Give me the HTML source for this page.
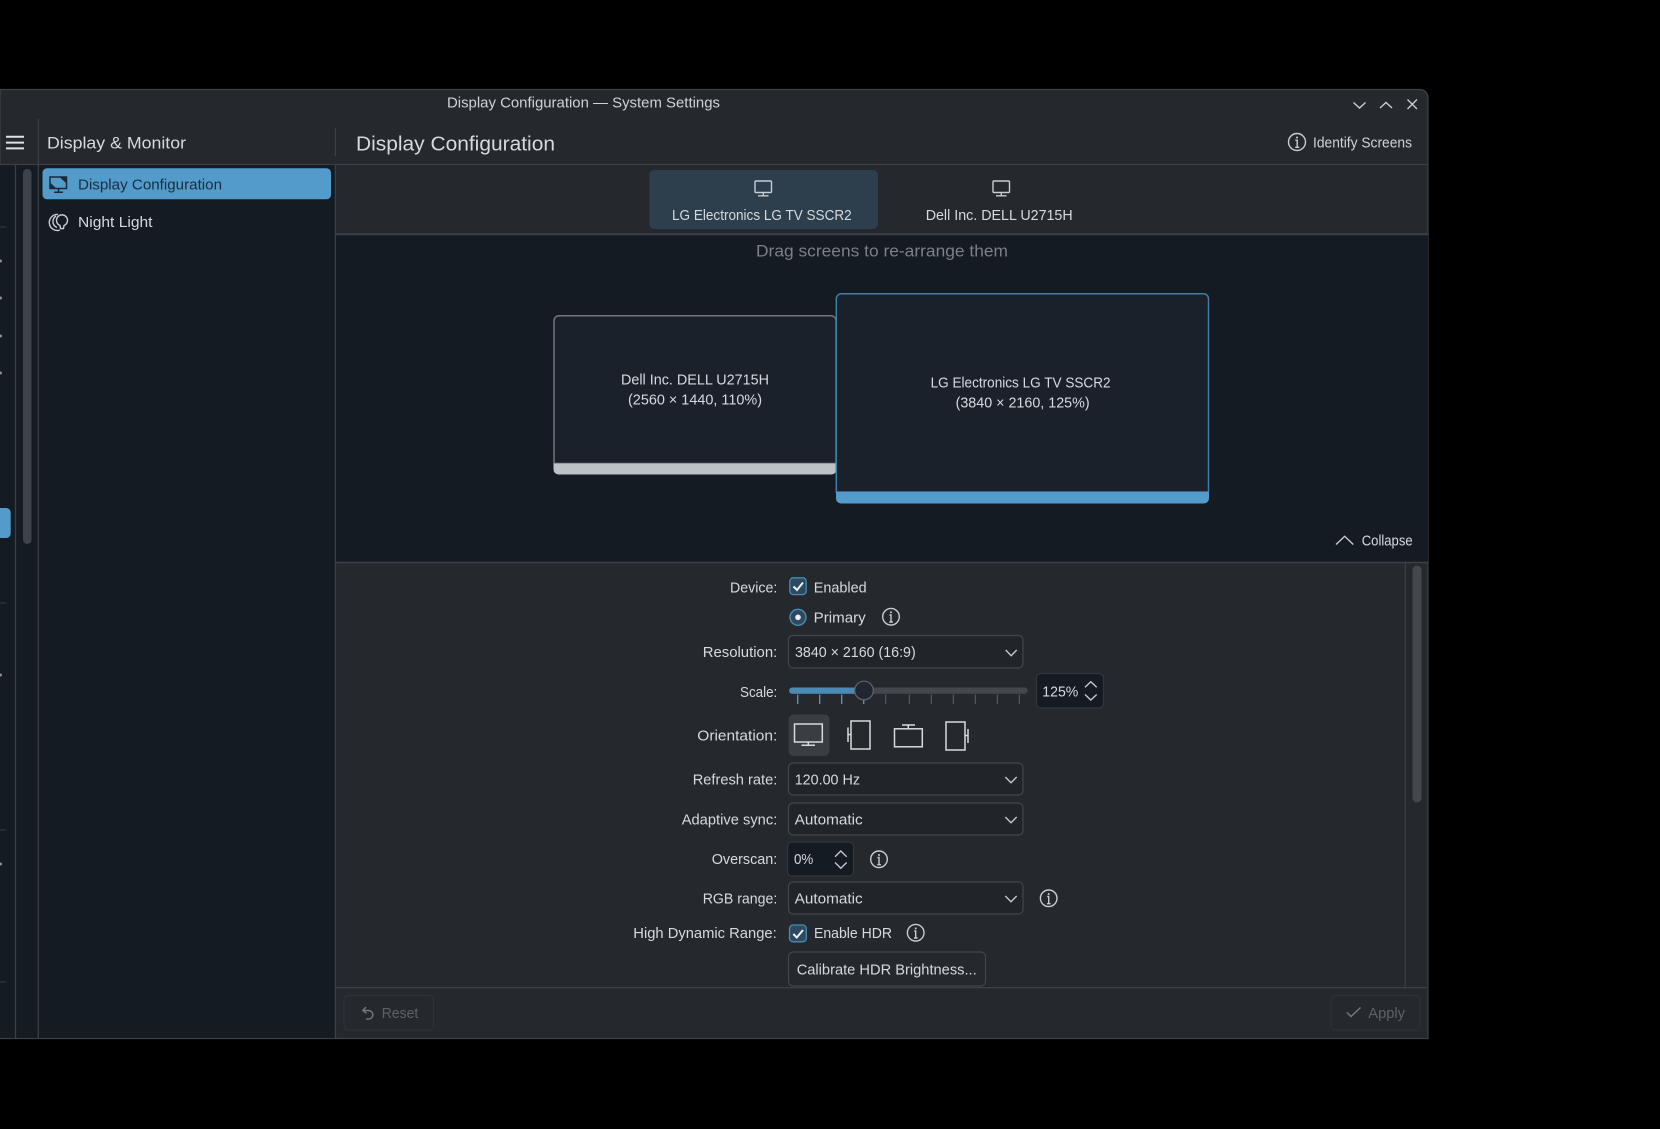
<!DOCTYPE html>
<html><head><meta charset="utf-8"><title>Display Configuration — System Settings</title>
<style>
html,body{margin:0;padding:0;background:#000;width:1660px;height:1129px;overflow:hidden}
svg{display:block;filter:blur(.3px);font-family:"Liberation Sans",sans-serif;font-size:15px;fill:#d6d9dd}
.l{stroke:#3c3f45;stroke-width:1.3;fill:none}
.ic{stroke:#c9ccd0;stroke-width:1.4;fill:none}
.ch{stroke:#c4c7cb;stroke-width:1.4;fill:none}
.box{fill:#212429;stroke:#43464c;stroke-width:1.2}
.spin{fill:#141b23;stroke:#33373d;stroke-width:1.2}
</style></head><body>
<svg width="1660" height="1129" viewBox="0 0 1660 1129" xmlns="http://www.w3.org/2000/svg">
<rect width="1660" height="1129" fill="#000"/>
<!-- window -->
<path d="M0 89.500H1420a8 8 0 0 1 8 8V1038.500H0Z" fill="#25282d" stroke="#3e4147" stroke-width="1.200"/>
<!-- sidebars -->
<rect x="0" y="165" width="335" height="873" fill="#151b23"/>
<rect x="336" y="235" width="1092" height="327" fill="#151b23"/>
<!-- lines -->
<path class="l" d="M15.500 165V1038M38.300 119V1038M335.400 128V156M335.400 165V1038M0 164.500H1428M336 234.300H1428M336 562.500H1428M1405.300 563V988M336 987.700H1428" />
<path d="M336 234.300H1428" stroke="#3c3f45" stroke-width="2"/>
<path d="M336 562.500H1428" stroke="#3c3f45" stroke-width="1.600"/>
<!-- left strip fragments -->
<path d="M0 227H6M0 603H6M0 830H6M0 982H6" stroke="#333840" stroke-width="1"/>
<g fill="#8d9196"><circle cx="0.500" cy="261" r="1.500"/><circle cx="0.500" cy="298" r="1.500"/><circle cx="0.500" cy="336" r="1.500"/><circle cx="0.500" cy="373" r="1.500"/><circle cx="0.500" cy="675" r="1.500"/><circle cx="0.500" cy="864" r="1.500"/></g>
<path d="M0 508H6a4.500 4.500 0 0 1 4.700 4.500V533.500a4.500 4.500 0 0 1-4.700 4.500H0Z" fill="#529bcb"/>
<!-- left scrollbar -->
<rect x="23" y="169" width="8.500" height="375" rx="4.200" fill="#3e434a"/>
<!-- title -->
<text x="447" y="107.500" font-size="14.500" textLength="273" lengthAdjust="spacingAndGlyphs" fill="#cfd2d6">Display Configuration — System Settings</text>
<!-- window controls -->
<path class="ic" d="M1353.500 102.500L1359.500 108L1365.500 102.500M1380 108L1386 102.500L1392 108M1407.500 99.500L1417 109M1417 99.500L1407.500 109"/>
<!-- hamburger -->
<path d="M6 136.800H24M6 142.600H24M6 148.400H24" stroke="#dfe2e5" stroke-width="2"/>
<text x="47" y="148.300" font-size="17" textLength="139" lengthAdjust="spacingAndGlyphs">Display &amp; Monitor</text>
<text x="356" y="150.700" font-size="20.500" textLength="199" lengthAdjust="spacingAndGlyphs">Display Configuration</text>
<!-- identify -->
<g class="ic"><circle cx="1297" cy="142" r="8.500"/><path d="M1295.300 140.200H1297.200V147.300M1295.200 147.300H1299.200"/></g><circle cx="1297" cy="137.500" r="1" fill="#c9ccd0"/>
<text x="1313" y="147.500" font-size="14.500" textLength="99" lengthAdjust="spacingAndGlyphs" fill="#cfd2d6">Identify Screens</text>
<!-- sidebar items -->
<rect x="42.500" y="168.300" width="288.500" height="31" rx="4.500" fill="#529bcb"/>
<g stroke="#1c2a37" fill="none" stroke-width="1.500"><rect x="50" y="177" width="16.500" height="11.500"/><path d="M54 192.300H63M58.500 188.500V192"/></g>
<path d="M66 177.500V183L60 177.500ZM50.500 188V183L56 188Z" fill="#1c2a37"/>
<text x="78" y="189.500" textLength="144" lengthAdjust="spacingAndGlyphs" fill="#1c2d3c">Display Configuration</text>
<g class="ic" stroke-width="1.300"><path d="M58 214.500a8 8 0 1 0 2 15.500M56 216a6.500 6.500 0 0 0 1 11.500"/><path d="M60 225.500a5.500 5.500 0 1 1 4 0L63.500 228.500H60.500Z"/></g>
<text x="78" y="227" textLength="74.500" lengthAdjust="spacingAndGlyphs">Night Light</text>
<!-- tabs -->
<rect x="649.300" y="170" width="228.700" height="59" rx="5" fill="#2d3f4d"/>
<g id="mon" class="ic"><rect x="755" y="181" width="16.500" height="11.500" rx="1"/><path d="M758 195.800H768.500M763.300 192.500V195.500"/></g>
<g class="ic"><rect x="993" y="181" width="16.500" height="11.500" rx="1"/><path d="M996 195.800H1006.500M1001.300 192.500V195.500"/></g>
<text x="672" y="220.200" font-size="14.800" textLength="179.700" lengthAdjust="spacingAndGlyphs">LG Electronics LG TV SSCR2</text>
<text x="925.700" y="220.200" font-size="14.800" textLength="147" lengthAdjust="spacingAndGlyphs">Dell Inc. DELL U2715H</text>
<text x="756" y="256.500" font-size="16.500" textLength="252" lengthAdjust="spacingAndGlyphs" fill="#7c7f84">Drag screens to re-arrange them</text>
<!-- screens -->
<path d="M554 320.800a5 5 0 0 1 5-5H831a5 5 0 0 1 5 5V463.500H554Z" fill="#1b212b" stroke="#73767b" stroke-width="1.500"/>
<path d="M553.500 463.500H836.500V469.500a5 5 0 0 1-5 5H558.500a5 5 0 0 1-5-5Z" fill="#bdc2c6"/>
<text x="621" y="384.500" font-size="14.500" textLength="148" lengthAdjust="spacingAndGlyphs">Dell Inc. DELL U2715H</text>
<text x="628" y="404.500" font-size="14.500" textLength="134" lengthAdjust="spacingAndGlyphs">(2560 × 1440, 110%)</text>
<path d="M836.300 298.800a5 5 0 0 1 5-5H1203.500a5 5 0 0 1 5 5V492H836.300Z" fill="#1b212b" stroke="#447ca3" stroke-width="1.500"/>
<path d="M836 492H1209V498.500a5 5 0 0 1-5 5H841a5 5 0 0 1-5-5Z" fill="#529bcb"/>
<text x="930.600" y="387.400" font-size="14.500" textLength="180" lengthAdjust="spacingAndGlyphs">LG Electronics LG TV SSCR2</text>
<text x="955.600" y="407.400" font-size="14.500" textLength="134" lengthAdjust="spacingAndGlyphs">(3840 × 2160, 125%)</text>
<!-- collapse -->
<path class="ic" stroke-width="1.500" d="M1336 544.500L1344.700 536.300L1353.300 544.500"/>
<text x="1361.700" y="545.300" font-size="14.500" textLength="51" lengthAdjust="spacingAndGlyphs">Collapse</text>
<!-- form scrollbar -->
<rect x="1412.500" y="565.500" width="9" height="237" rx="4.500" fill="#44484e"/>
<!-- form -->
<text x="730" y="592.300" textLength="47.300" lengthAdjust="spacingAndGlyphs">Device:</text>
<rect x="789.800" y="577.800" width="16.400" height="16.800" rx="3.500" fill="#2d4a60" stroke="#4a8ab5" stroke-width="1.300"/>
<path d="M793.500 586.500L797 590L803 582.500" stroke="#eef0f2" stroke-width="2" fill="none"/>
<text x="813.700" y="592.300" textLength="53" lengthAdjust="spacingAndGlyphs">Enabled</text>
<circle cx="798" cy="617.300" r="8" fill="#2d4a60" stroke="#4a8ab5" stroke-width="1.400"/><circle cx="798" cy="617.300" r="2.800" fill="#eef0f2"/>
<text x="813.700" y="622.700" textLength="52" lengthAdjust="spacingAndGlyphs">Primary</text>
<g class="ic"><circle cx="891" cy="616.700" r="8.300"/><path d="M889.500 615H891V622M889.300 622H892.900"/></g><circle cx="891" cy="612.300" r="1" fill="#c9ccd0"/>

<text x="702.700" y="657" textLength="74.600" lengthAdjust="spacingAndGlyphs">Resolution:</text>
<rect x="788.500" y="635.500" width="234.500" height="32.500" rx="4.500" class="box"/>
<text x="795" y="657" textLength="120.700" lengthAdjust="spacingAndGlyphs">3840 × 2160 (16:9)</text>
<path class="ch" d="M1005.700 650L1011.200 655.700L1016.700 650"/>

<text x="740" y="697" textLength="37.300" lengthAdjust="spacingAndGlyphs">Scale:</text>
<rect x="789.300" y="687.500" width="238.400" height="6.300" rx="3.100" fill="#44474c"/>
<path d="M792.300 687.500H860V693.800H792.300a3.150 3.150 0 0 1 0-6.300Z" fill="#4a8ab5"/>
<path stroke="#529bcb" stroke-width="1.300" d="M797.700 694.500V704M819.700 694.500V704M841.700 694.500V704M863.700 694.500V704"/>
<path stroke="#5a5d62" stroke-width="1.100" d="M885.700 694.500V704M909.300 694.500V704M931.300 694.500V704M953.300 694.500V704M975.300 694.500V704M997.300 694.500V704M1019.300 694.500V704"/>
<circle cx="864" cy="690.500" r="9.300" fill="#212730" stroke="#62666b" stroke-width="1.200"/>
<rect x="1036.500" y="673.500" width="67" height="34.500" rx="4.500" class="spin"/>
<text x="1042.300" y="696.700" textLength="36" lengthAdjust="spacingAndGlyphs">125%</text>
<path class="ch" d="M1085 687.300L1090.800 681.700L1096.700 687.300M1085 694.500L1090.800 700L1096.700 694.500"/>

<text x="697.300" y="740.300" textLength="80" lengthAdjust="spacingAndGlyphs">Orientation:</text>
<rect x="788.500" y="714.500" width="41" height="41.500" rx="5" fill="#3a3d42"/>
<g stroke="#d8dadd" stroke-width="1.500" fill="none">
<rect x="794.500" y="724" width="27.800" height="18"/><path d="M801.500 745.300H815M808.300 742.500V745"/>
<rect x="851" y="721" width="19" height="28"/><path d="M848 727.500V742M848 734.500H851"/>
<rect x="894.500" y="728.800" width="27.800" height="18"/><path d="M902 725H915M908.300 725V728.500"/>
<rect x="946" y="722" width="19" height="28"/><path d="M968 729V743M965 735.500H968"/>
</g>

<text x="692.700" y="784.500" textLength="84.600" lengthAdjust="spacingAndGlyphs">Refresh rate:</text>
<rect x="788.500" y="763" width="234.500" height="32" rx="4.500" class="box"/>
<text x="794.700" y="784.500" textLength="65.300" lengthAdjust="spacingAndGlyphs">120.00 Hz</text>
<path class="ch" d="M1005.300 777L1011 782.700L1016.700 777"/>

<text x="681.700" y="824.500" textLength="95.600" lengthAdjust="spacingAndGlyphs">Adaptive sync:</text>
<rect x="788.500" y="803" width="234.500" height="32" rx="4.500" class="box"/>
<text x="794.700" y="824.500" textLength="68" lengthAdjust="spacingAndGlyphs">Automatic</text>
<path class="ch" d="M1005.300 817L1011 822.700L1016.700 817"/>

<text x="711.700" y="864" textLength="65.600" lengthAdjust="spacingAndGlyphs">Overscan:</text>
<rect x="787.500" y="842" width="66" height="34" rx="4.500" class="spin"/>
<text x="794" y="864" textLength="19.300" lengthAdjust="spacingAndGlyphs">0%</text>
<path class="ch" d="M835 856.700L840.800 851L846.700 856.700M835 862.500L840.800 868.300L846.700 862.500"/>
<g class="ic"><circle cx="879" cy="859.300" r="8.300"/><path d="M877.500 857.500H879V864.700M877.300 864.700H880.900"/></g><circle cx="879" cy="855" r="1" fill="#c9ccd0"/>

<text x="702.700" y="903.700" textLength="74.600" lengthAdjust="spacingAndGlyphs">RGB range:</text>
<rect x="788.500" y="882" width="234.500" height="32" rx="4.500" class="box"/>
<text x="794.700" y="903.700" textLength="68" lengthAdjust="spacingAndGlyphs">Automatic</text>
<path class="ch" d="M1005.300 896L1011 901.700L1016.700 896"/>
<g class="ic"><circle cx="1048.700" cy="898.300" r="8.300"/><path d="M1047.200 896.500H1048.700V903.700M1047 903.700H1050.600"/></g><circle cx="1048.700" cy="894" r="1" fill="#c9ccd0"/>

<text x="633.300" y="938" textLength="143.400" lengthAdjust="spacingAndGlyphs">High Dynamic Range:</text>
<rect x="789.500" y="925" width="16.800" height="16.800" rx="3.500" fill="#2d4a60" stroke="#4a8ab5" stroke-width="1.300"/>
<path d="M793.300 934L796.800 937.500L803 930" stroke="#eef0f2" stroke-width="2" fill="none"/>
<text x="814" y="938" textLength="78" lengthAdjust="spacingAndGlyphs">Enable HDR</text>
<g class="ic"><circle cx="915.700" cy="932.700" r="8.300"/><path d="M914.200 931H915.700V938M914 938H917.600"/></g><circle cx="915.700" cy="928.400" r="1" fill="#c9ccd0"/>
<rect x="788.500" y="952" width="197" height="34" rx="4.500" fill="#25282d" stroke="#43464c" stroke-width="1.200"/>
<text x="796.700" y="974.500" textLength="180" lengthAdjust="spacingAndGlyphs">Calibrate HDR Brightness...</text>

<!-- footer -->
<rect x="344" y="995.500" width="89.500" height="34.500" rx="4.500" fill="none" stroke="#2e3137" stroke-width="1.200"/>
<path d="M366 1007L362.800 1010.500L366.500 1013.300M363 1010.500H368.500a4.300 4.300 0 0 1 0 8.600H366" stroke="#75787d" stroke-width="1.400" fill="none"/>
<text x="381.700" y="1018" textLength="36.600" lengthAdjust="spacingAndGlyphs" fill="#5c626b">Reset</text>
<rect x="1331" y="995.500" width="89" height="34.500" rx="4.500" fill="none" stroke="#2e3137" stroke-width="1.200"/>
<path d="M1347 1012.500L1351 1016.500L1360.500 1007.500" stroke="#75787d" stroke-width="1.500" fill="none"/>
<text x="1368.300" y="1018" textLength="36.700" lengthAdjust="spacingAndGlyphs" fill="#5c626b">Apply</text>
</svg>
</body></html>
